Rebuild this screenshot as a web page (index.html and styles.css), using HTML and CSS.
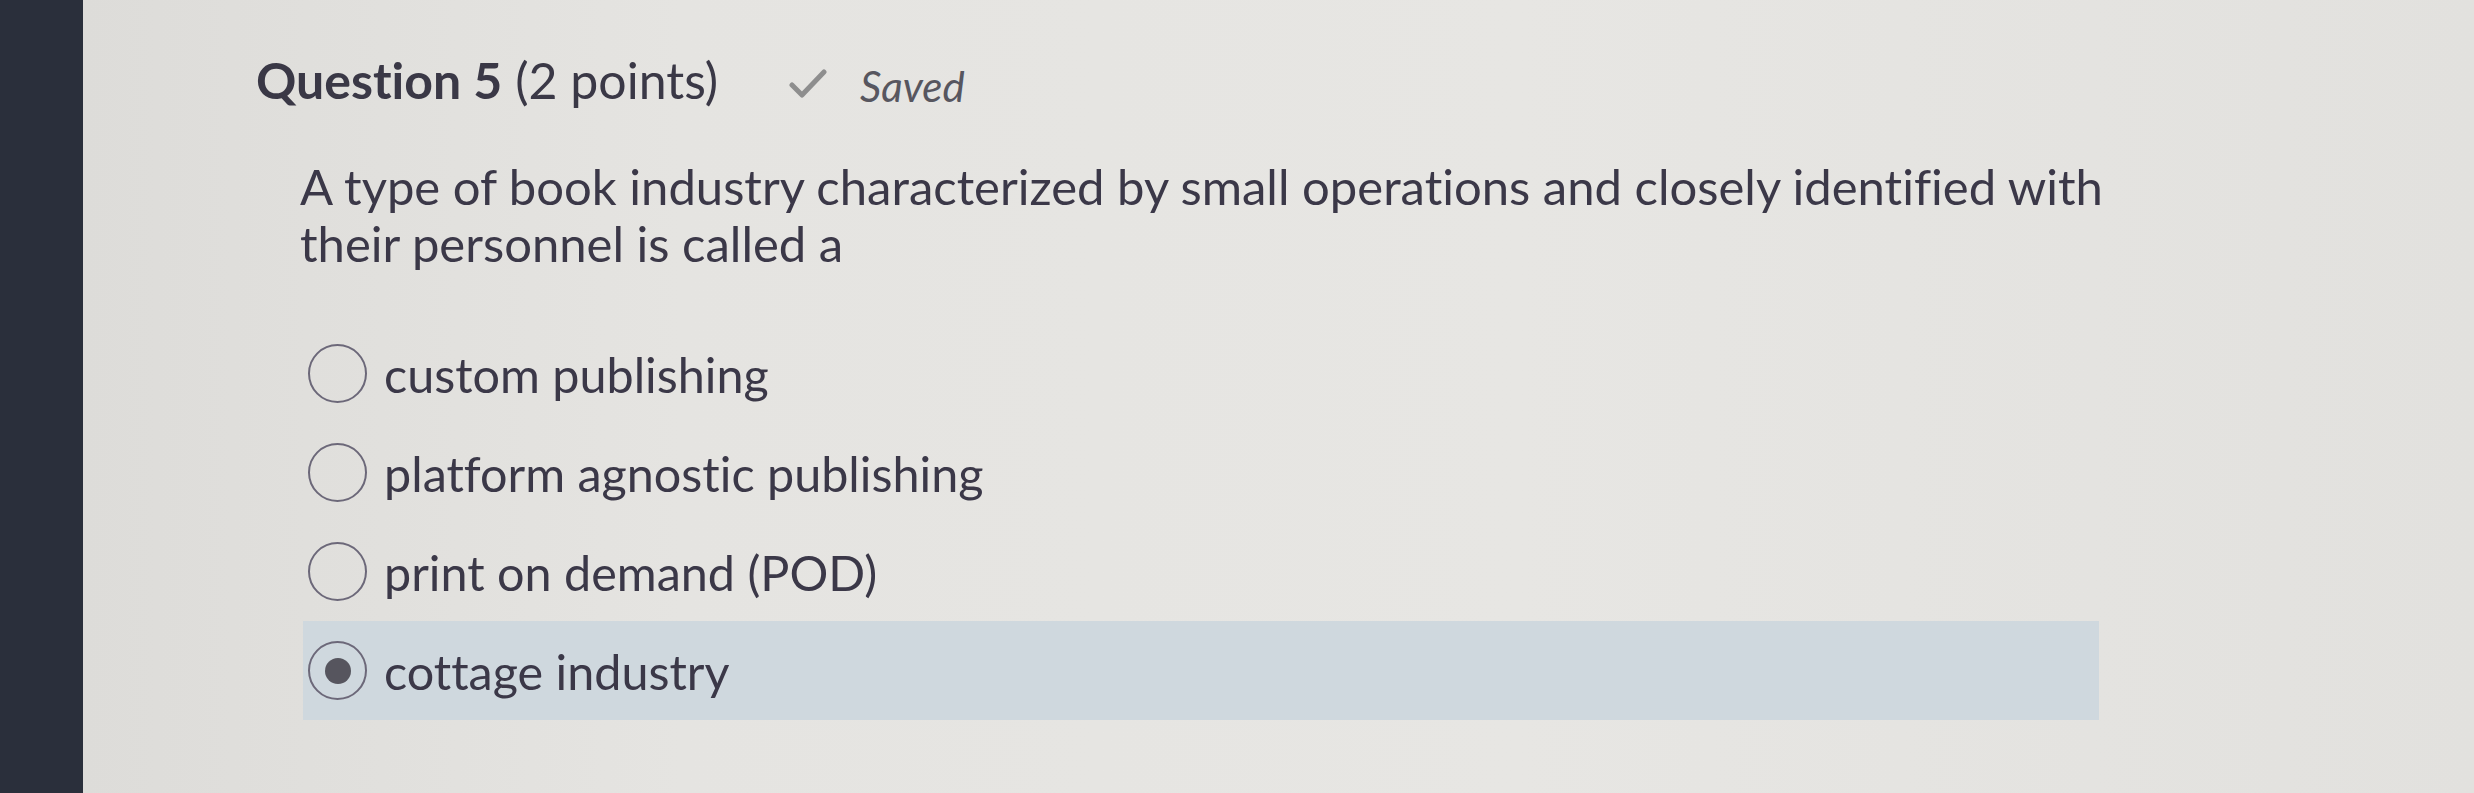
FILE: index.html
```html
<!DOCTYPE html>
<html lang="en">
<head>
    <meta charset="UTF-8" />
    <meta name="viewport" content="width=device-width, initial-scale=1.0" />
    <title>Quiz - Question 5</title>
    <link rel="stylesheet" href="styles.css">
</head>
<body>
    <div class="nav-rail"></div>

    <main class="quiz-page">
        <!-- Question header with save status -->
        <div class="question-header">
            <h2 class="question-title"><strong>Question 5</strong> (2 points)</h2>
            <span class="save-status">
                <svg class="check-icon" viewBox="0 0 40 30" width="40" height="30" aria-hidden="true">
                    <path d="M4 16 L14 26 L36 3" fill="none" stroke="#8e8e8e" stroke-width="5" stroke-linecap="round" stroke-linejoin="round"/>
                </svg>
                <em>Saved</em>
            </span>
        </div>

        <p class="question-text">A type of book industry characterized by small operations and closely identified with their personnel is called a</p>

        <!-- Answer choices -->
        <div class="choices">
            <label class="choice">
                <span class="radio"></span>
                <span class="choice-text">custom publishing</span>
            </label>
            <label class="choice">
                <span class="radio"></span>
                <span class="choice-text">platform agnostic publishing</span>
            </label>
            <label class="choice">
                <span class="radio"></span>
                <span class="choice-text">print on demand (POD)</span>
            </label>
            <label class="choice selected">
                <span class="radio checked"></span>
                <span class="choice-text">cottage industry</span>
            </label>
        </div>
    </main>
</body>
</html>
```

FILE: styles.css
```css
/* Page frame: dark navigation rail on the left, quiz content on the right */
body {
    margin: 0;
    display: flex;
    height: 100vh;
    overflow: hidden;
    font-family: Lato, "Open Sans", Arial, sans-serif;
    font-variant-ligatures: none;
    color: #3b3848;
}

.nav-rail {
    width: 83px;
    flex-shrink: 0;
    background-color: #2a2f3b;
}

.quiz-page {
    flex: 1;
    padding: 50px 0 0 173px;
    background: linear-gradient(90deg, #dddcd9 0%, #e5e4e1 25%, #e7e6e3 60%, #e2e1de 100%);
}

/* Header row */
.question-header {
    display: flex;
    align-items: baseline;
}

.question-title {
    margin: 0;
    font-size: 50px;
    font-weight: 400;
    line-height: 1.2;
    color: #3a3846;
}

.question-title strong {
    font-weight: 700;
}

.save-status {
    display: flex;
    align-items: baseline;
    margin-left: 70px;
    font-size: 42px;
    color: #57565f;
}

.save-status em {
    position: relative;
    top: 3px;
}

.check-icon {
    margin-right: 32px;
}

/* Question body */
.question-text {
    width: 1900px;
    margin: 48px 0 0 44px;
    font-size: 49px;
    line-height: 57px;
}

/* Choices */
.choices {
    width: 1796px;
    margin: 52px 0 0 47px;
    display: flex;
    flex-direction: column;
}

.choice {
    display: flex;
    align-items: center;
    min-height: 99px;
    padding-left: 5px;
    font-size: 48.5px;
    cursor: pointer;
}

.choice.selected {
    background-color: #cfd8de;
}

.radio {
    width: 55px;
    height: 55px;
    border: 2.5px solid #6c6879;
    border-radius: 50%;
    display: flex;
    align-items: center;
    justify-content: center;
    margin-right: 17px;
    flex-shrink: 0;
}

.radio.checked::after {
    content: "";
    width: 26px;
    height: 26px;
    border-radius: 50%;
    background-color: #56555e;
}
```
